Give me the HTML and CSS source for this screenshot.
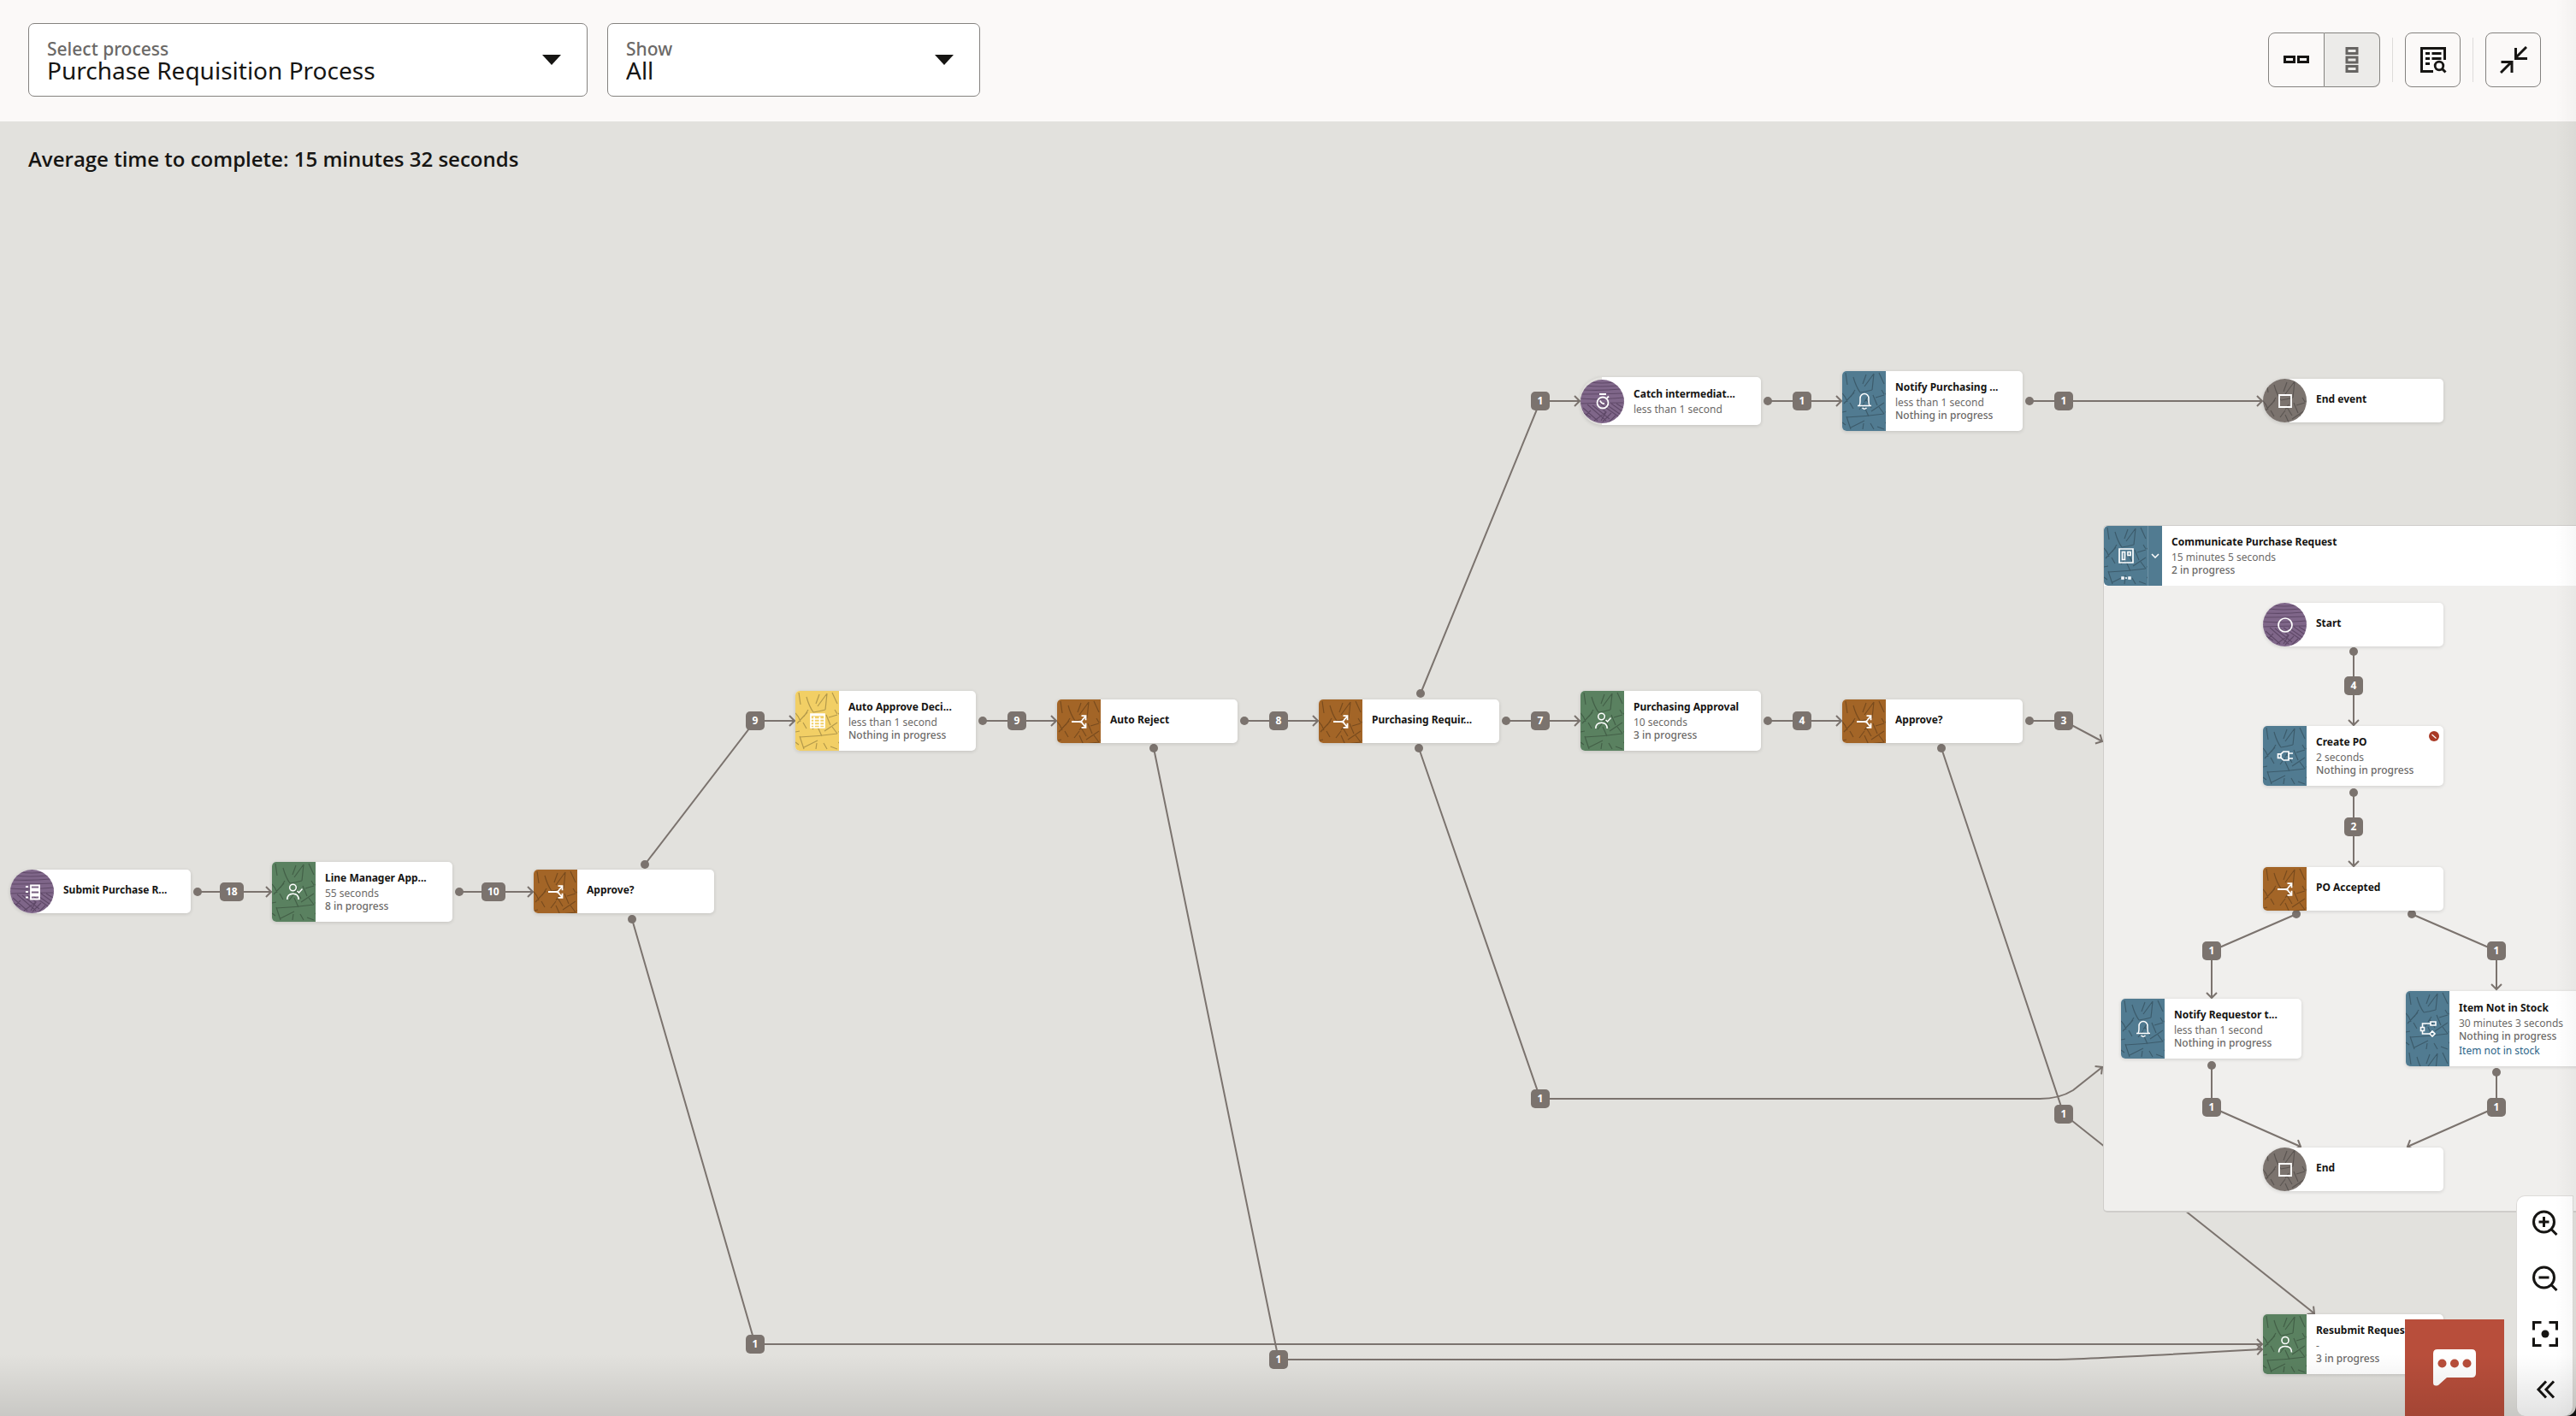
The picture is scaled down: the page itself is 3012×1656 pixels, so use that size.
FILE: index.html
```html
<!DOCTYPE html>
<html lang="en">
<head>
<meta charset="utf-8">
<meta name="viewport" content="width=device-width, initial-scale=1">
<title>Purchase Requisition Process</title>
<link rel="stylesheet" href="styles.css">
</head>
<body>
<svg class="defs" aria-hidden="true">
  <defs>
    <marker id="dot" viewBox="-6 -6 12 12" markerWidth="12" markerHeight="12" markerUnits="userSpaceOnUse"><circle r="5" fill="#7b736e"/></marker>
    <marker id="arrow" viewBox="-9 -8 12 16" markerWidth="12" markerHeight="16" markerUnits="userSpaceOnUse" orient="auto"><path d="M-6-6L0 0L-6 6" fill="none" stroke="#7b736e" stroke-width="2"/></marker>
    <pattern id="cracks" width="50" height="70" patternUnits="userSpaceOnUse">
      <path d="M4 2L6 16M13 7Q16 18 21 25M21 25Q28 24 35 22M35 22L37 3M24 15L28 4M26 18L37 3M43 2L49 15M0 26Q4 30 6 36M2 38L14 25M9 37L13 44M36 28L41 40M39 31L49 28M20 45L26 37M26 42L31 53M5 54Q28 53 49 50M5 53L10 68M10 66L26 58M15 22L10 30M24 68L25 61M33 61L37 68M41 65L49 68M34 47L49 37M43 42L49 50M28 33L34 43M0 48L5 47M0 60L4 63M30 30L26 36M46 22L49 27" fill="none" stroke="#000" stroke-opacity=".26" stroke-width="1.200"/>
    </pattern>
    <pattern id="waves" width="50" height="50" patternUnits="userSpaceOnUse">
      <path d="M12 3Q24 5 40 3M7 7Q22 9 44 7M3 12Q25 13 47 11M1 17Q25 17 49 16M0 22Q20 24 50 21M0 28Q24 27 50 27M24 29L50 47M30 29L50 43M36 28L50 38M42 28L50 33M3 33L20 48M8 29L30 48M14 30L34 46M20 30L30 38L16 48M30 38L24 48M2 38L12 44M6 42L12 36M36 39L26 49M41 42L33 50" fill="none" stroke="#2c1c35" stroke-opacity=".4" stroke-width="1.200"/>
    </pattern>
  </defs>
  <symbol id="i-form" viewBox="0 0 20 20"><path d="M8 2.500h10v4H8zM8 8.500h10v4H8zM8 14.500h10v4H8z" fill="none" stroke="#fff" stroke-width="1.800"/><path d="M2 3h3v2H2zM2 9h3v2H2zM2 15.500h3v2H2z" fill="#fff"/></symbol>
  <symbol id="i-user" viewBox="0 0 20 20"><g fill="none" stroke="#fff" stroke-width="1.600"><circle cx="10" cy="5.500" r="4"/><path d="M2.500 19.500c0-5 3-7 7.500-7s7.500 2 7.500 7"/></g></symbol>
  <symbol id="i-check" viewBox="0 0 20 20"><g fill="none" stroke="#fff" stroke-width="1.500"><circle cx="8.500" cy="5" r="3.800"/><path d="M1.800 19c0-4.800 2.400-6.800 6.700-6.800s6.700 2 6.700 6.800M13.500 9l2 2 4-4.500"/></g></symbol>
  <symbol id="i-branch" viewBox="0 0 20 20"><path d="M1 10h9q3 0 4-2.500l3.500-4M10 10q3 0 4 2.500l3.500 4M12.500 3.200h5v5M12.500 16.800h5v-5" fill="none" stroke="#fff" stroke-width="1.800"/></symbol>
  <symbol id="i-table" viewBox="0 0 20 20"><path d="M2 2h16v16H2z" fill="#f2cf65"/><path d="M2 2h16v16H2zM2 3.500h16M2 8h16M2 11.500h16M2 15h16M6 5v13M12.500 5v13" fill="none" stroke="#fff" stroke-width="1.700"/></symbol>
  <symbol id="i-timer" viewBox="0 0 20 20"><g fill="none" stroke="#fff" stroke-width="1.800"><circle cx="10" cy="12" r="6.500"/><path d="M6 2h8M15 6.500l2-2M7 9.500q1 3.500 5 3.500"/></g></symbol>
  <symbol id="i-bell" viewBox="0 0 20 20"><path d="M2 15.500h16M4 15.500q1-2 1-5V7a5 5.500 0 0 1 10 0v3.500q0 3 1 5M7.500 18q2.500 2.500 5 0" fill="none" stroke="#fff" stroke-width="1.500"/></symbol>
  <symbol id="i-stop" viewBox="0 0 20 20"><path d="M3 3h14v14H3z" fill="none" stroke="#fff" stroke-width="1.800"/></symbol>
  <symbol id="i-start" viewBox="0 0 20 20"><circle cx="10" cy="10" r="8" fill="none" stroke="#fff" stroke-width="1.700"/></symbol>
  <symbol id="i-plug" viewBox="0 0 20 20"><path d="M1.500 7.800h3.500v4.500H1.500zM5 7.800L8 5h6v10H8l-3-2.800M14 7h5M14 13h5" fill="none" stroke="#fff" stroke-width="1.700"/></symbol>
  <symbol id="i-flow" viewBox="0 0 20 20"><path d="M13 2h6v4h-6zM1.500 8.500h4v4h-4zM12 16l3-3 3 3-3 3zM3.500 8.500V4H13M3.500 12.500V16H12" fill="none" stroke="#fff" stroke-width="1.600"/></symbol>
  <symbol id="i-board" viewBox="0 0 20 20"><path d="M2 2h16v16H2zM5.500 5.500h3v9h-3zM12 5.500h3v4h-3z" fill="none" stroke="#fff" stroke-width="1.700"/></symbol>
</svg>

<div class="app">
  <header class="toolbar">
    <div class="field field-process">
      <label for="process">Select process</label>
      <select id="process"><option>Purchase Requisition Process</option></select>
      <svg width="22" height="12" viewBox="0 0 22 12" aria-hidden="true"><path d="M0 0h22L11 12z" fill="#161513"/></svg>
    </div>
    <div class="field field-show">
      <label for="show">Show</label>
      <select id="show"><option>All</option></select>
      <svg width="22" height="12" viewBox="0 0 22 12" aria-hidden="true"><path d="M0 0h22L11 12z" fill="#161513"/></svg>
    </div>
    <div class="actions">
      <div class="toggle">
        <button type="button" class="tool" aria-label="Horizontal layout"><svg width="32" height="32" viewBox="0 0 32 32"><path d="M2.500 12.500h11v6h-11zM18.500 12.500h11v6h-11z" fill="none" stroke="#161513" stroke-width="3"/></svg></button>
        <button type="button" class="tool is-on" aria-label="Vertical layout"><svg width="32" height="32" viewBox="0 0 32 32"><path d="M10 2.500h12v6H10zM10 13h12v6H10zM10 23.500h12v6H10z" fill="none" stroke="#666462" stroke-width="3"/></svg></button>
      </div>
      <span class="rule"></span>
      <button type="button" class="tool single" aria-label="View activity"><svg width="32" height="32" viewBox="0 0 32 32"><path d="M16 29.500H2.500v-27h27V16" fill="none" stroke="#161513" stroke-width="3"/><path d="M7 8.500h5M14.500 8.500h11M7 14.500h5M14.500 14.500h11M7 20.500h5" stroke="#161513" stroke-width="3"/><circle cx="23" cy="23" r="4.800" fill="none" stroke="#161513" stroke-width="2.800"/><path d="M26 26l4.500 4.500" stroke="#161513" stroke-width="3"/></svg></button>
      <span class="rule"></span>
      <button type="button" class="tool single" aria-label="Collapse"><svg width="32" height="32" viewBox="0 0 32 32"><path d="M31 1L19 13M18.500 2v12.500H32M1 31l12-12M1.500 18.500H14V31" fill="none" stroke="#161513" stroke-width="3"/></svg></button>
    </div>
  </header>

  <main class="canvas">
    <h1>Average time to complete: 15 minutes 32 seconds</h1>

    <svg class="edges" aria-hidden="true">
      <path d="M231 901H317"/><path d="M537 901H623"/>
      <path d="M754 869L883 701H929"/><path d="M1149 701H1235"/><path d="M1455 701H1541"/><path d="M1761 701H1847"/><path d="M2067 701H2153"/><path d="M2373 701H2413L2458 725"/>
      <path d="M1661 669L1801 327H1847"/><path d="M2067 327H2153"/><path d="M2373 327H2645"/>
      <path d="M1659 733L1801 1143H2385Q2408 1143 2424 1133L2458 1106"/>
      <path d="M2270 733L2413 1161L2706 1394"/>
      <path d="M739 933L883 1430H2645"/>
      <path d="M1349 733L1495 1448H2400Q2450 1447 2645 1436"/>
    </svg>

    <section class="group" style="left:2459px;top:472px">
      <div class="group-head">
        <div class="icon blue"><svg class="tex"><rect width="100%" height="100%" fill="url(#cracks)"/></svg><svg class="glyph"><use href="#i-board"/></svg><svg class="loop" width="12" height="4" viewBox="0 0 12 4"><path d="M1 1h2v2H1zM9 1h2v2H9zM5 2h2" fill="none" stroke="#fff" stroke-width="1.500"/></svg></div>
        <button type="button" class="expand" aria-label="Collapse subprocess"><svg width="10" height="6" viewBox="0 0 10 6"><path d="M1 1l4 4 4-4" fill="none" stroke="#fff" stroke-width="1.500"/></svg></button>
        <div class="text"><h2>Communicate Purchase Request</h2><p>15 minutes 5 seconds</p><p class="count">2 in progress</p></div>
      </div>
    </section>

    <svg class="edges" aria-hidden="true">
      <path d="M2752 620V706"/><path d="M2752 785V871"/>
      <path d="M2685 927L2586 970V1025"/><path d="M2820 927L2919 970V1015"/>
      <path d="M2586 1104V1153L2690 1199"/><path d="M2919 1112V1153L2815 1199"/>
    </svg>

    <article class="node round" style="left:12px;top:875px"><div class="icon purple"><svg class="tex"><rect width="100%" height="100%" fill="url(#waves)"/></svg><svg class="glyph"><use href="#i-form"/></svg></div><div class="text"><h2>Submit Purchase R...</h2></div></article>
    <article class="node tall" style="left:318px;top:866px"><div class="icon green"><svg class="tex"><rect width="100%" height="100%" fill="url(#cracks)"/></svg><svg class="glyph"><use href="#i-check"/></svg></div><div class="text"><h2>Line Manager App...</h2><p>55 seconds</p><p class="count">8 in progress</p></div></article>
    <article class="node" style="left:624px;top:875px"><div class="icon orange"><svg class="tex"><rect width="100%" height="100%" fill="url(#cracks)"/></svg><svg class="glyph"><use href="#i-branch"/></svg></div><div class="text"><h2>Approve?</h2></div></article>

    <article class="node tall" style="left:930px;top:666px"><div class="icon yellow"><svg class="tex"><rect width="100%" height="100%" fill="url(#cracks)"/></svg><svg class="glyph"><use href="#i-table"/></svg></div><div class="text"><h2>Auto Approve Deci...</h2><p>less than 1 second</p><p class="count">Nothing in progress</p></div></article>
    <article class="node" style="left:1236px;top:676px"><div class="icon orange"><svg class="tex"><rect width="100%" height="100%" fill="url(#cracks)"/></svg><svg class="glyph"><use href="#i-branch"/></svg></div><div class="text"><h2>Auto Reject</h2></div></article>
    <article class="node" style="left:1542px;top:676px"><div class="icon orange"><svg class="tex"><rect width="100%" height="100%" fill="url(#cracks)"/></svg><svg class="glyph"><use href="#i-branch"/></svg></div><div class="text"><h2>Purchasing Requir...</h2></div></article>
    <article class="node tall" style="left:1848px;top:666px"><div class="icon green"><svg class="tex"><rect width="100%" height="100%" fill="url(#cracks)"/></svg><svg class="glyph"><use href="#i-check"/></svg></div><div class="text"><h2>Purchasing Approval</h2><p>10 seconds</p><p class="count">3 in progress</p></div></article>
    <article class="node" style="left:2154px;top:676px"><div class="icon orange"><svg class="tex"><rect width="100%" height="100%" fill="url(#cracks)"/></svg><svg class="glyph"><use href="#i-branch"/></svg></div><div class="text"><h2>Approve?</h2></div></article>

    <article class="node round timed" style="left:1848px;top:299px"><div class="icon purple"><svg class="tex"><rect width="100%" height="100%" fill="url(#waves)"/></svg><svg class="glyph"><use href="#i-timer"/></svg></div><div class="text"><h2>Catch intermediat...</h2><p>less than 1 second</p></div></article>
    <article class="node tall" style="left:2154px;top:292px"><div class="icon blue"><svg class="tex"><rect width="100%" height="100%" fill="url(#cracks)"/></svg><svg class="glyph"><use href="#i-bell"/></svg></div><div class="text"><h2>Notify Purchasing ...</h2><p>less than 1 second</p><p class="count">Nothing in progress</p></div></article>
    <article class="node round" style="left:2646px;top:301px"><div class="icon gray"><svg class="tex"><rect width="100%" height="100%" fill="url(#cracks)"/></svg><svg class="glyph"><use href="#i-stop"/></svg></div><div class="text"><h2>End event</h2></div></article>

    <article class="node round" style="left:2646px;top:563px"><div class="icon purple"><svg class="tex"><rect width="100%" height="100%" fill="url(#waves)"/></svg><svg class="glyph"><use href="#i-start"/></svg></div><div class="text"><h2>Start</h2></div></article>
    <article class="node tall" style="left:2646px;top:707px"><div class="icon blue"><svg class="tex"><rect width="100%" height="100%" fill="url(#cracks)"/></svg><svg class="glyph"><use href="#i-plug"/></svg></div><div class="text"><h2>Create PO</h2><p>2 seconds</p><p class="count">Nothing in progress</p></div><svg class="fault" width="12" height="12" viewBox="0 0 12 12"><circle cx="6" cy="6" r="6" fill="#a93a26"/><path d="M3.500 4l5 4.500" stroke="#fff" stroke-width="1.200"/></svg></article>
    <article class="node" style="left:2646px;top:872px"><div class="icon orange"><svg class="tex"><rect width="100%" height="100%" fill="url(#cracks)"/></svg><svg class="glyph"><use href="#i-branch"/></svg></div><div class="text"><h2>PO Accepted</h2></div></article>
    <article class="node tall" style="left:2480px;top:1026px"><div class="icon blue"><svg class="tex"><rect width="100%" height="100%" fill="url(#cracks)"/></svg><svg class="glyph"><use href="#i-bell"/></svg></div><div class="text"><h2>Notify Requestor t...</h2><p>less than 1 second</p><p class="count">Nothing in progress</p></div></article>
    <article class="node linked" style="left:2813px;top:1017px"><div class="icon blue"><svg class="tex"><rect width="100%" height="100%" fill="url(#cracks)"/></svg><svg class="glyph"><use href="#i-flow"/></svg></div><div class="text"><h2>Item Not in Stock</h2><p>30 minutes 3 seconds</p><p class="count">Nothing in progress</p><a href="#item-not-in-stock">Item not in stock</a></div></article>
    <article class="node round" style="left:2646px;top:1200px"><div class="icon gray"><svg class="tex"><rect width="100%" height="100%" fill="url(#cracks)"/></svg><svg class="glyph"><use href="#i-stop"/></svg></div><div class="text"><h2>End</h2></div></article>
    <article class="node tall" style="left:2646px;top:1395px"><div class="icon green"><svg class="tex"><rect width="100%" height="100%" fill="url(#cracks)"/></svg><svg class="glyph"><use href="#i-user"/></svg></div><div class="text"><h2>Resubmit Request</h2><p>-</p><p class="count">3 in progress</p></div></article>

    <span class="badge" style="left:257px;top:890px">18</span>
    <span class="badge" style="left:563px;top:890px">10</span>
    <span class="badge" style="left:872px;top:690px">9</span>
    <span class="badge" style="left:1178px;top:690px">9</span>
    <span class="badge" style="left:1484px;top:690px">8</span>
    <span class="badge" style="left:1790px;top:690px">7</span>
    <span class="badge" style="left:2096px;top:690px">4</span>
    <span class="badge" style="left:2402px;top:690px">3</span>
    <span class="badge" style="left:1790px;top:316px">1</span>
    <span class="badge" style="left:2096px;top:316px">1</span>
    <span class="badge" style="left:2402px;top:316px">1</span>
    <span class="badge" style="left:1790px;top:1132px">1</span>
    <span class="badge" style="left:2402px;top:1150px">1</span>
    <span class="badge" style="left:872px;top:1419px">1</span>
    <span class="badge" style="left:1484px;top:1437px">1</span>
    <span class="badge" style="left:2741px;top:649px">4</span>
    <span class="badge" style="left:2741px;top:814px">2</span>
    <span class="badge" style="left:2575px;top:959px">1</span>
    <span class="badge" style="left:2908px;top:959px">1</span>
    <span class="badge" style="left:2575px;top:1142px">1</span>
    <span class="badge" style="left:2908px;top:1142px">1</span>

    <button type="button" class="chat" aria-label="Chat"><svg width="50" height="43" viewBox="0 0 50 43"><path d="M5 0h40q5 0 5 5v23q0 5-5 5H16L6 42q-6 2-6-3V5q0-5 5-5z" fill="#fff"/><circle cx="10.500" cy="16.500" r="5" fill="#b84e3b"/><circle cx="25" cy="16.500" r="5" fill="#b84e3b"/><circle cx="39.500" cy="16.500" r="5" fill="#b84e3b"/></svg></button>

    <div class="zoombar">
      <button type="button" aria-label="Zoom in"><svg width="30" height="30" viewBox="0 0 30 30"><circle cx="13.500" cy="14" r="12" /><path d="M7.500 14h12M13.500 8v12M22 22.500l6.500 6.500"/></svg></button>
      <button type="button" aria-label="Zoom out"><svg width="30" height="30" viewBox="0 0 30 30"><circle cx="13.500" cy="14" r="12"/><path d="M7.500 14h12M22 22.500l6.500 6.500"/></svg></button>
      <button type="button" aria-label="Fit to view"><svg width="30" height="30" viewBox="0 0 30 30"><path d="M1.500 10.500v-9h9M19.500 1.500h9v9M28.500 19.500v9h-9M10.500 28.500h-9v-9"/><circle class="solid" cx="15" cy="15" r="4.500"/></svg></button>
      <button type="button" aria-label="Hide controls"><svg width="30" height="30" viewBox="0 0 30 30"><path d="M16 5.500L7 15l9 9.500M25 5.500L16 15l9 9.500"/></svg></button>
    </div>
  </main>
</div>
</body>
</html>
```
FILE: styles.css
```css
* { box-sizing: border-box; }

body {
  margin: 0;
  background: #111;
  color: #161513;
  font-family: "Noto Sans", "Open Sans", sans-serif;
}

button, select { font: inherit; color: inherit; }
h1, h2, p { margin: 0; }
.defs { position: absolute; width: 0; height: 0; }

.app {
  position: relative;
  display: flex;
  flex-direction: column;
  height: 100vh;
  overflow: hidden;
  border-bottom-right-radius: 12px;
}

/* soft shading along the bottom and right edges of the window */
.app::after {
  content: "";
  position: absolute;
  inset: 0;
  pointer-events: none;
  background:
    linear-gradient(to top, rgba(0, 0, 0, .11), rgba(0, 0, 0, 0) 72px),
    linear-gradient(to left, rgba(0, 0, 0, .03), rgba(0, 0, 0, 0) 24px);
}

/* Top bar */
.toolbar {
  display: flex;
  align-items: center;
  gap: 23px;
  padding: 27px 41px 29px 33px;
  background: #fbf9f8;
}

.field { display: grid; align-items: center; }
.field > * { grid-area: 1 / 1; }
.field-process { width: 654px; }
.field-show { width: 436px; }

.field label {
  z-index: 1;
  align-self: start;
  justify-self: start;
  margin: 18px 0 0 22px;
  font-size: 21px;
  font-weight: 500;
  line-height: 24px;
  color: #6b6967;
  pointer-events: none;
}

.field select {
  appearance: none;
  width: 100%;
  height: 86px;
  padding: 36px 60px 12px 21px;
  border: 1px solid #84827f;
  border-radius: 7px;
  background: #fff;
  font-size: 28px;
  line-height: 36px;
}

.field svg {
  z-index: 1;
  justify-self: end;
  margin-right: 31px;
  pointer-events: none;
}

.actions { display: flex; align-items: center; gap: 14px; margin-left: auto; }
.rule { width: 1px; height: 52px; background: #dedcda; }

.tool {
  display: grid;
  place-items: center;
  width: 65px;
  height: 64px;
  padding: 0;
  border: 1px solid #84827f;
  background: transparent;
}
.single { border-radius: 8px; }
.toggle { display: flex; }
.toggle .tool:first-child { width: 66px; border-radius: 8px 0 0 8px; }
.toggle .tool:last-child { border-left: 0; border-radius: 0 8px 8px 0; }
.is-on { background: #ecebe9; }

/* Diagram */
.canvas {
  position: relative;
  flex: 1;
  overflow: hidden;
  background: #e2e1dd;
}

h1 {
  padding: 28px 33px;
  font-family: "Open Sans", "Noto Sans", sans-serif;
  font-size: 24px;
  font-weight: 600;
  line-height: 32px;
}

.edges {
  position: absolute;
  inset: 0;
  width: 100%;
  height: 100%;
}
.edges path {
  fill: none;
  stroke: #7b736e;
  stroke-width: 2;
  marker-start: url(#dot);
  marker-end: url(#arrow);
}

.badge {
  position: absolute;
  min-width: 22px;
  height: 22px;
  padding: 0 7px;
  border-radius: 5px;
  background: #7b736e;
  color: #fff;
  font-size: 12px;
  font-weight: 700;
  line-height: 22px;
  text-align: center;
}

.node {
  position: absolute;
  display: flex;
  width: 211px;
  height: 51px;
  border-radius: 5px;
  background: #fff;
  box-shadow: 0 1px 4px rgba(0, 0, 0, .14);
}
.tall { height: 70px; }
.linked { height: 88px; }
.timed { height: 56px; }

.icon {
  position: relative;
  display: grid;
  flex: none;
  place-items: center;
  width: 51px;
  overflow: hidden;
  border-radius: 5px 0 0 5px;
}
.tex { position: absolute; inset: 0; width: 100%; height: 100%; }
.glyph { position: relative; width: 20px; height: 20px; }

.round { align-items: center; border-radius: 26px 5px 5px 26px; }
.round .icon { height: 51px; border-radius: 50%; }
.timed {
  background: linear-gradient(to right, transparent 25px, #fff 25px);
}

.purple { background: #7f6689; }
.green { background: #5a8160; }
.orange { background: #a36527; }
.yellow { background: #f2cf65; }
.blue { background: #517b91; }
.gray { background: #7b736e; }

.text {
  display: flex;
  flex-direction: column;
  justify-content: center;
  padding-left: 11px;
  font-size: 12px;
  line-height: 15px;
  white-space: nowrap;
}
.text h2 { font-size: 12px; font-weight: 700; line-height: 16px; }
.text h2:only-child { padding-bottom: 3px; }
.text p, .text a { color: #6b6967; }
.text h2 + p { margin-top: 2px; }
.text .count { font-weight: 500; }
.text a { margin-top: 2px; color: #2c6488; text-decoration: none; }

.fault { position: absolute; top: 6px; right: 5px; }

.group {
  position: absolute;
  right: 0;
  height: 804px;
  border: 1px solid #cfcdca;
  border-width: 1px 0 2px 1px;
  border-radius: 5px 0 0 5px;
  background: #f0efed;
}
.group-head { display: flex; height: 70px; background: #fff; border-radius: 5px 0 0 0; }
.group .icon { border-radius: 5px 0 0 5px; }
.expand {
  display: grid;
  place-items: center;
  width: 17px;
  padding: 0;
  border: 0;
  border-left: 1px solid #6f94a7;
  background: #517b91;
}
.loop { position: absolute; bottom: 7px; left: 20px; }

/* Floating controls */
.chat {
  position: absolute;
  right: 84px;
  bottom: 0;
  display: grid;
  place-items: center;
  width: 116px;
  height: 113px;
  padding: 0;
  border: 0;
  background: #b84e3b;
}

.zoombar {
  position: absolute;
  right: 3px;
  bottom: 0;
  display: flex;
  flex-direction: column;
  gap: 3px;
  width: 67px;
  border: 1px solid #dddbd8;
  border-bottom: 0;
  border-radius: 10px 0 12px 10px;
  background: #fff;
}
.zoombar button {
  display: grid;
  place-items: center;
  height: 62px;
  padding: 0;
  border: 0;
  background: transparent;
}
.zoombar svg { fill: none; stroke: #161513; stroke-width: 3; }
.zoombar .solid { fill: #161513; stroke: none; }
```
